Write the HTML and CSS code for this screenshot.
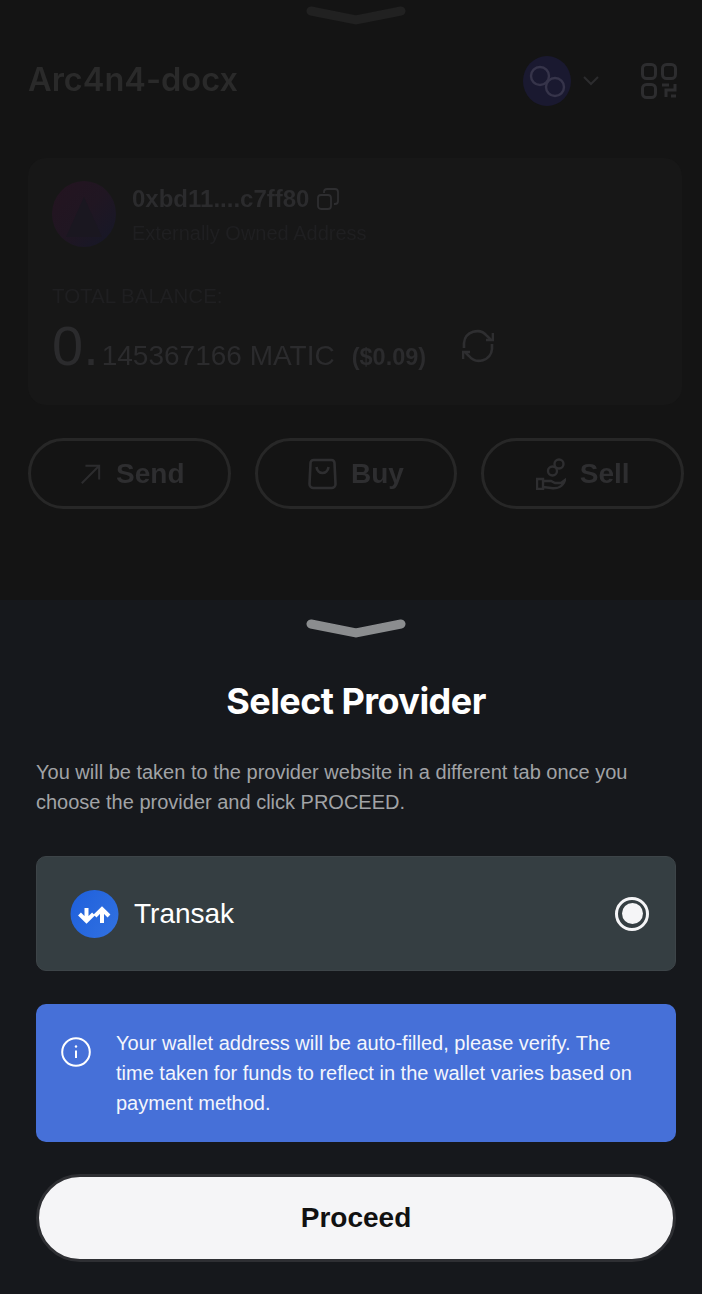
FILE: index.html
```html
<!DOCTYPE html>
<html lang="en">
<head>
    <meta charset="UTF-8">
    <meta name="viewport" content="width=device-width, initial-scale=1.0">
    <title>Select Provider</title>
    <link rel="stylesheet" href="styles.css">
</head>
<body>

<div class="wallet">
    <svg class="handle handle-dim" width="100" height="20" viewBox="0 0 100 20">
        <path d="M5 6 L50 15 L95 6" fill="none" stroke="currentColor" stroke-width="9" stroke-linecap="round"/>
    </svg>

    <div class="wallet-header">
        <div class="wallet-name">Arc4n4-docx</div>
        <div class="network">
            <svg class="network-icon" width="48" height="50" viewBox="0 0 48 50">
                <ellipse cx="24" cy="25" rx="24" ry="25" fill="#1a1930"/>
                <circle cx="17" cy="20" r="9" fill="none" stroke="#36344a" stroke-width="2.4"/>
                <circle cx="32" cy="31" r="9" fill="none" stroke="#36344a" stroke-width="2.4"/>
            </svg>
            <svg class="chevron" width="16" height="10" viewBox="0 0 16 10">
                <path d="M1 1 L8 8 L15 1" fill="none" stroke="#2c2c2e" stroke-width="2"/>
            </svg>
        </div>
        <svg class="qr" width="36" height="36" viewBox="0 0 36 36" fill="none" stroke="#2d2d2f" stroke-width="3">
            <rect x="1.5" y="1.5" width="13" height="14" rx="4"/>
            <rect x="21.5" y="1.5" width="13" height="14" rx="4"/>
            <rect x="1.5" y="21.5" width="13" height="13" rx="4"/>
            <path d="M21 22 H28 M34 21 V27 H25 V34 M30 33 H35"/>
        </svg>
    </div>

    <div class="balance-card">
        <div class="account">
            <svg class="avatar" width="64" height="66" viewBox="0 0 64 66">
                <defs>
                    <linearGradient id="avatarFill" x1="0" y1="0" x2="1" y2="1">
                        <stop offset="0" stop-color="#241420"/>
                        <stop offset="0.5" stop-color="#201622"/>
                        <stop offset="1" stop-color="#151828"/>
                    </linearGradient>
                </defs>
                <ellipse cx="32" cy="33" rx="32" ry="33" fill="url(#avatarFill)"/>
                <path d="M32 16 L50 56 H14 Z" fill="#1a1720"/>
            </svg>
            <div class="account-text">
                <div class="address">
                    <span>0xbd11....c7ff80</span>
                    <svg width="22" height="22" viewBox="0 0 22 22" fill="none" stroke="#2e2e30" stroke-width="1.8">
                        <rect x="1" y="7" width="13" height="14" rx="3"/>
                        <path d="M7 5 V4 a3 3 0 0 1 3 -3 h8 a3 3 0 0 1 3 3 v9 a3 3 0 0 1 -3 3 h-1"/>
                    </svg>
                </div>
                <div class="address-type">Externally Owned Address</div>
            </div>
        </div>
        <div class="balance-label">TOTAL BALANCE:</div>
        <div class="balance">
            <span class="balance-int">0.</span><span class="balance-dec">145367166 MATIC</span><span class="balance-usd">($0.09)</span>
            <svg class="refresh" width="32" height="34" viewBox="0 0 32 34" fill="none" stroke="#2e2e30" stroke-width="2.6">
                <path d="M2 19 V14 A13 13 0 0 1 25 7 L29 11"/>
                <path d="M30 15 V20 A13 13 0 0 1 7 27 L3 23"/>
                <path d="M31 4 V11 H24 M1 30 V23 H8"/>
            </svg>
        </div>
    </div>

    <div class="actions">
        <div class="action">
            <svg width="22" height="22" viewBox="0 0 24 24" fill="none" stroke="#2c2c2e" stroke-width="2.2">
                <path d="M3 22 L22 3 M7 3 H22 V18"/>
            </svg>
            <span>Send</span>
        </div>
        <div class="action">
            <svg width="29" height="32" viewBox="0 0 28 32" fill="none" stroke="#2e2e30" stroke-width="2.6">
                <path d="M5 2 H23 A3 3 0 0 1 26 5 L27 26 A4 4 0 0 1 23 30 H5 A4 4 0 0 1 1 26 L2 5 A3 3 0 0 1 5 2 Z"/>
                <path d="M8 9 C9 17 19 17 20 9"/>
            </svg>
            <span>Buy</span>
        </div>
        <div class="action">
            <svg width="30" height="32" viewBox="0 0 30 32" fill="none" stroke="#2e2e30" stroke-width="2.4">
                <circle cx="23" cy="6" r="4.5"/>
                <circle cx="16.5" cy="13" r="4.5"/>
                <path d="M1 21 H7 V31 H1 Z M7 23 H15 L19 25 H25 L29 22 C27 29 21 31 15 30 L7 29"/>
            </svg>
            <span>Sell</span>
        </div>
    </div>
</div>

<div class="sheet">
    <svg class="handle" width="100" height="20" viewBox="0 0 100 20">
        <path d="M5 6 L50 15 L95 6" fill="none" stroke="currentColor" stroke-width="9" stroke-linecap="round"/>
    </svg>

    <h1 class="sheet-title">Select Provider</h1>
    <p class="sheet-desc">You will be taken to the provider website in a different tab once you choose the provider and click PROCEED.</p>

    <div class="provider">
        <svg class="provider-logo" width="49" height="48" viewBox="0 0 49 48">
            <defs>
                <linearGradient id="logoFill" x1="0" y1="0" x2="1" y2="0.6">
                    <stop offset="0" stop-color="#1e5fdc"/>
                    <stop offset="1" stop-color="#2f6fe0"/>
                </linearGradient>
            </defs>
            <circle cx="24.5" cy="24" r="24" fill="url(#logoFill)"/>
            <path d="M16.5 18 V31 M9.5 24 L16.5 31 L23.5 24 M32 33 V20 M25 26 L32 19 L39 26" fill="none" stroke="#fff" stroke-width="4"/>
        </svg>
        <span class="provider-name">Transak</span>
        <span class="radio"><span class="radio-dot"></span></span>
    </div>

    <div class="notice">
        <svg class="notice-icon" width="30" height="30" viewBox="0 0 30 30" fill="none" stroke="#fff">
            <circle cx="15" cy="15" r="13.8" stroke-width="2"/>
            <path d="M15 13.5 V21" stroke-width="2"/>
            <circle cx="15" cy="9.5" r="1.2" fill="#fff" stroke="none"/>
        </svg>
        <p class="notice-text">Your wallet address will be auto-filled, please verify. The time taken for funds to reflect in the wallet varies based on payment method.</p>
    </div>

    <button class="proceed">Proceed</button>
</div>

</body>
</html>
```

FILE: styles.css
```css
* {
    box-sizing: border-box;
}
body {
    margin: 0;
    width: 702px;
    height: 1294px;
    overflow: hidden;
    display: flex;
    flex-direction: column;
    background-color: #141414;
    font-family: "Liberation Sans", Arial, sans-serif;
}
.handle {
    display: block;
    margin: 0 auto;
    color: #8b8d8f;
}
.handle-dim {
    color: #212121;
}

/* dimmed wallet page behind the sheet */
.wallet {
    height: 600px;
    flex-shrink: 0;
    padding: 5px 18px 0 28px;
    filter: blur(0.6px);
}
.wallet .handle-dim {
    margin-left: 278px;
}
.wallet-header {
    display: flex;
    align-items: center;
    margin-top: 31px;
    height: 50px;
    padding-right: 7px;
}
.wallet-name {
    flex: 1;
    padding-bottom: 4px;
    font-family: Inter, sans-serif;
    font-size: 32.5px;
    font-weight: 600;
    color: #2a2a2a;
}
.network {
    display: flex;
    align-items: center;
    gap: 12px;
    margin-right: 42px;
}
.balance-card {
    width: 654px;
    height: 247px;
    margin-top: 52px;
    padding: 23px 24px;
    border-radius: 18px;
    background-color: #171717;
}
.account {
    display: flex;
    gap: 16px;
}
.address {
    display: flex;
    align-items: center;
    gap: 8px;
    margin-top: 4px;
    font-size: 24px;
    font-weight: 700;
    color: #2b2b2d;
}
.address-type {
    margin-top: 9px;
    font-size: 20px;
    color: #1f1f21;
}
.balance-label {
    margin-top: 37px;
    font-size: 20.5px;
    color: #1f1f21;
}
.balance {
    display: flex;
    align-items: baseline;
    margin-top: 5px;
    color: #2b2b2d;
}
.balance-int {
    font-size: 56px;
}
.balance-dec {
    margin-left: 3px;
    font-size: 28px;
}
.balance-usd {
    margin-left: 17px;
    font-size: 23.5px;
    font-weight: 700;
}
.refresh {
    margin-left: 36px;
    align-self: center;
}
.actions {
    display: flex;
    gap: 24px;
    margin-top: 33px;
}
.action {
    width: 203px;
    height: 71px;
    display: flex;
    align-items: center;
    justify-content: center;
    gap: 14px;
    border: 3px solid #272727;
    border-radius: 36px;
    font-size: 28px;
    font-weight: 700;
    color: #2e2e30;
}
.action:first-child {
    gap: 15px;
    padding-left: 5px;
}

/* bottom sheet */
.sheet {
    flex: 1;
    padding: 18px 26px 0 36px;
    background-color: #16181c;
}
.sheet-title {
    margin: 41px 0 0;
    font-family: Inter, sans-serif;
    font-size: 36px;
    line-height: 44px;
    font-weight: 700;
    letter-spacing: -0.55px;
    text-align: center;
    color: #fff;
}
.sheet-desc {
    margin: 34px 0 0;
    width: 640px;
    font-size: 20px;
    line-height: 30px;
    color: #a1a3a6;
}
.provider {
    display: flex;
    align-items: center;
    width: 640px;
    height: 115px;
    margin-top: 39px;
    padding: 0 26px 0 33px;
    border: 1px solid #3d4448;
    border-radius: 10px;
    background-color: #353e42;
}
.provider-name {
    flex: 1;
    margin-left: 15px;
    font-size: 28px;
    color: #fff;
}
.radio {
    width: 34px;
    height: 34px;
    display: flex;
    align-items: center;
    justify-content: center;
    border: 3px solid #f5f5f7;
    border-radius: 50%;
}
.radio-dot {
    width: 21px;
    height: 21px;
    border-radius: 50%;
    background-color: #f5f5f7;
}
.notice {
    display: flex;
    gap: 25px;
    width: 640px;
    height: 138px;
    margin-top: 33px;
    padding: 24px 25px;
    border-radius: 10px;
    background-color: #4670d8;
}
.notice-icon {
    flex-shrink: 0;
    margin-top: 9px;
}
.notice-text {
    margin: 0;
    font-size: 20px;
    line-height: 30px;
    color: #f4f6fc;
}
.proceed {
    display: block;
    width: 640px;
    height: 88px;
    margin-top: 32px;
    border: 3px solid #2e2f33;
    border-radius: 44px;
    background-color: #f5f5f7;
    font-family: "Liberation Sans", Arial, sans-serif;
    font-size: 28px;
    font-weight: 700;
    color: #111;
}
```
